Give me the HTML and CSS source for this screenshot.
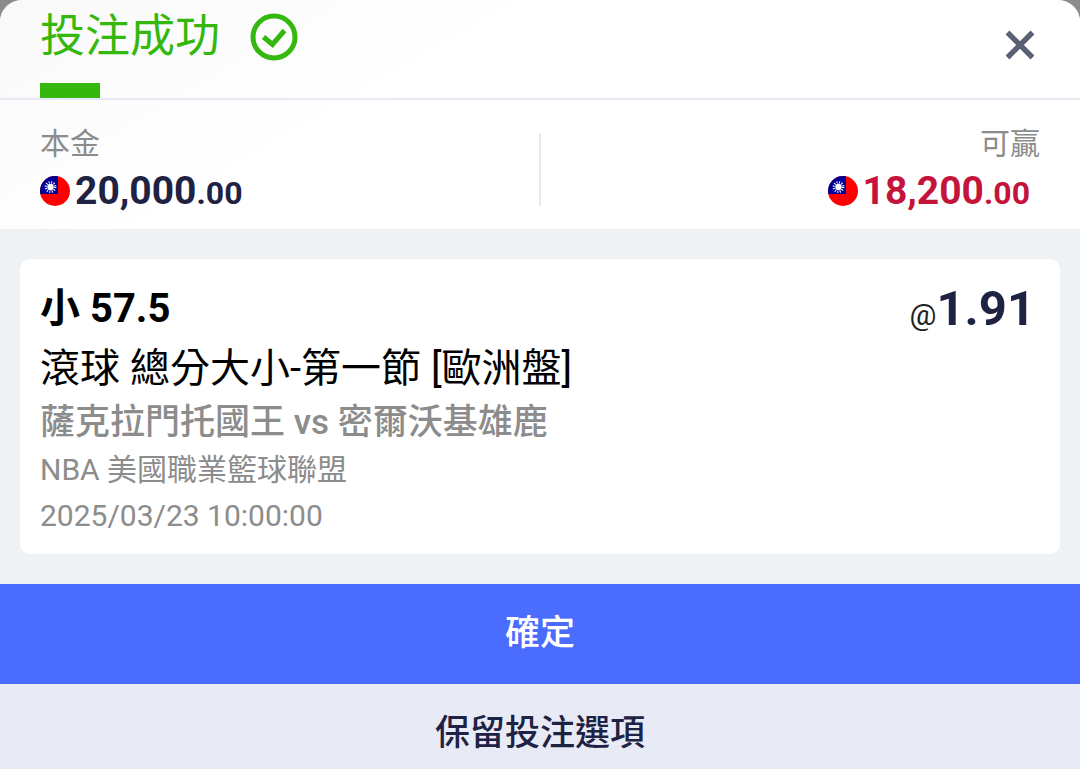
FILE: index.html
```html
<!DOCTYPE html>
<html lang="zh-Hant">
<head>
    <meta charset="UTF-8">
    <meta name="viewport" content="width=device-width, initial-scale=1.0">
    <title>投注成功</title>
    <link rel="stylesheet" href="styles.css">
</head>
<body>
    <main class="bet-dialog">
        <div class="top">
            <header class="header">
                <div class="title">
                    <div class="title-row">
                        <h1>投注成功</h1>
                        <svg class="success-icon" viewBox="0 0 48 48" aria-hidden="true">
                            <circle cx="24" cy="24" r="21" fill="none" stroke="#35b80d" stroke-width="5"/>
                            <path d="M13.5 24 L22.5 31.5 L34.5 17.5" fill="none" stroke="#35b80d" stroke-width="5"/>
                        </svg>
                    </div>
                    <div class="title-bar"></div>
                </div>
                <button type="button" class="close" aria-label="關閉">
                    <svg viewBox="0 0 30 30" aria-hidden="true">
                        <path d="M2.5 2.5 L27.5 27.5 M27.5 2.5 L2.5 27.5" stroke="#5a6175" stroke-width="5.4"/>
                    </svg>
                </button>
            </header>

            <!-- Stake and payout -->
            <section class="summary">
                <div class="summary-item">
                    <p class="label">本金</p>
                    <p class="amount">
                        <svg class="flag" viewBox="0 0 30 30" aria-hidden="true">
                            <clipPath id="flag-clip"><circle cx="15" cy="15" r="15"/></clipPath>
                            <g id="flag-art" clip-path="url(#flag-clip)">
                                <rect width="30" height="30" fill="#fe0000"/>
                                <rect width="18" height="18" fill="#000095"/>
                                <circle cx="10.5" cy="11" r="4.7" fill="none" stroke="#fff" stroke-width="2.4" stroke-dasharray="1 1.46"/>
                                <circle cx="10.5" cy="11" r="3.2" fill="#fff"/>
                            </g>
                        </svg>
                        <span>20,000<small>.00</small></span>
                    </p>
                </div>
                <div class="divider"></div>
                <div class="summary-item win">
                    <p class="label">可贏</p>
                    <p class="amount">
                        <svg class="flag" viewBox="0 0 30 30" aria-hidden="true"><use href="#flag-art"/></svg>
                        <span>18,200<small>.00</small></span>
                    </p>
                </div>
            </section>
        </div>

        <!-- Bet details -->
        <section class="details">
            <article class="card">
                <div class="selection">
                    <h2>小 57.5</h2>
                    <p class="odds"><span class="at">@</span>1.91</p>
                </div>
                <p class="market">滾球 總分大小-第一節 [歐洲盤]</p>
                <p class="teams">薩克拉門托國王 vs 密爾沃基雄鹿</p>
                <p class="league">NBA 美國職業籃球聯盟</p>
                <p class="time">2025/03/23 10:00:00</p>
            </article>
        </section>

        <button type="button" class="btn confirm">確定</button>
        <button type="button" class="btn keep">保留投注選項</button>
    </main>
</body>
</html>
```

FILE: styles.css
```css
* {
    box-sizing: border-box;
}

body {
    margin: 0;
    background: #8c8c8c;
    font-family: Roboto, "Noto Sans CJK TC", sans-serif;
    color: #000;
}

h1, h2, p {
    margin: 0;
}

button {
    border: none;
    padding: 0;
    font-family: inherit;
    cursor: pointer;
}

svg {
    display: block;
}

.bet-dialog {
    display: flex;
    flex-direction: column;
    min-height: 100vh;
    border-radius: 22px 22px 0 0;
    overflow: hidden;
    background: #eef2f5;
}

.top {
    background: linear-gradient(150deg, #f9f9fa 0, #fff 280px);
}

/* Header */
.header {
    display: flex;
    justify-content: space-between;
    align-items: flex-start;
    padding: 0 40px;
    border-bottom: 2px solid #e8e9f2;
}

.title-row {
    display: flex;
    align-items: center;
    gap: 30px;
    height: 73px;
    color: #35b80d;
}

.title-bar {
    width: 60px;
    height: 15px;
    margin-top: 10px;
    background: #35b80d;
}

h1 {
    font-size: 45px;
    font-weight: 400;
    line-height: 72px;
}

.success-icon {
    width: 48px;
    height: 48px;
}

.close {
    padding: 30px 5px;
    background: none;
}

.close svg {
    width: 30px;
    height: 30px;
}

/* Stake and payout */
.summary {
    display: flex;
    padding: 24px 40px 11px;
}

.summary-item {
    flex: 1;
}

.divider {
    width: 2px;
    margin: 9px 0 12px;
    background: #e8e9ee;
}

.label {
    font-size: 30px;
    line-height: 40px;
    color: #8c8c8c;
}

.amount {
    display: flex;
    align-items: center;
    gap: 5px;
    font-size: 39px;
    font-weight: 700;
    line-height: 54px;
    color: #1e2243;
}

.amount small {
    font-size: 32px;
    line-height: 1;
}

.flag {
    width: 30px;
    height: 30px;
}

.win {
    display: flex;
    flex-direction: column;
    align-items: flex-end;
}

.win .amount {
    padding-right: 10px;
    color: #c5143c;
}

/* Bet details */
.details {
    padding: 30px 20px;
}

.card {
    padding: 20px 20px 15px;
    border-radius: 10px;
    background: #fff;
}

.selection {
    display: flex;
    justify-content: space-between;
    align-items: center;
}

h2 {
    font-size: 40px;
    line-height: 58px;
}

.odds {
    padding-right: 5px;
    font-size: 49px;
    font-weight: 700;
    line-height: 60px;
    color: #1e2243;
}

.at {
    font-size: 30px;
    font-weight: 400;
    line-height: 1;
    color: #222;
}

.market {
    font-size: 40px;
    line-height: 60px;
}

.teams {
    font-size: 35px;
    font-weight: 500;
    line-height: 48px;
    color: #8c8c8c;
}

.league, .time {
    font-size: 30px;
    line-height: 46px;
    color: #8c8c8c;
}

/* Actions */
.btn {
    font-size: 35px;
    font-weight: 500;
}

.confirm {
    height: 100px;
    padding-bottom: 10px;
    background: #4a6dff;
    color: #fff;
}

.keep {
    flex: 1;
    min-height: 84px;
    padding: 6px 0 0;
    background: #e8ebf6;
    color: #1e2243;
}
```
